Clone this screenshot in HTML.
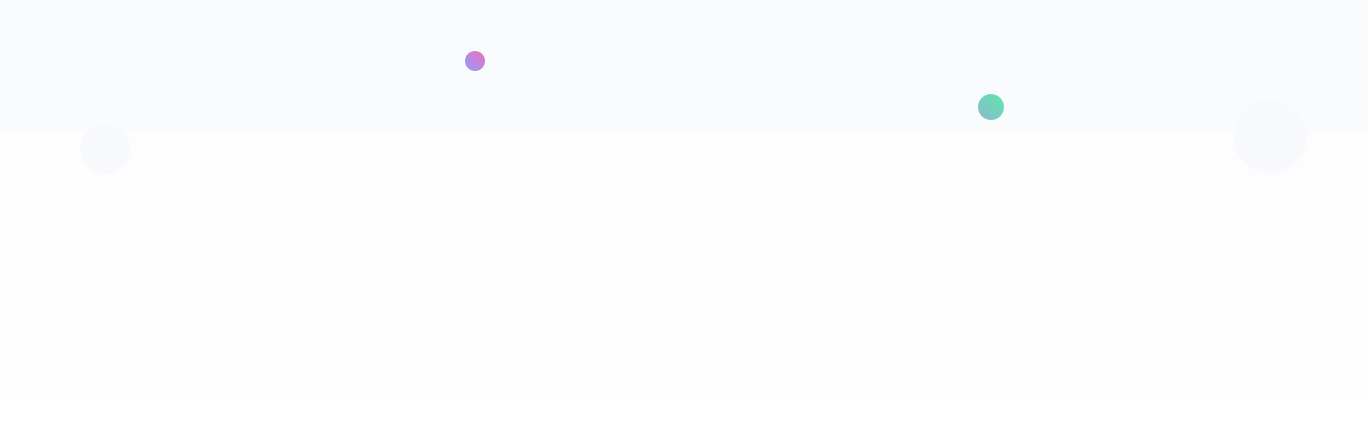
<!DOCTYPE html>
<html><head><style>
html,body{margin:0;padding:0;width:1368px;height:424px;overflow:hidden;background:#fff;position:relative}
.b{position:absolute;left:0;width:1368px}
.c{position:absolute;border-radius:50%}
</style></head><body>
<div class="b" style="top:0;height:132px;background:#fafbfc"></div>
<div class="b" style="top:132px;height:133px;background:#fdfdfe"></div>
<div class="b" style="top:265px;height:131px;background:#fefefe"></div>
<div class="c" style="left:465px;top:51px;width:20px;height:20px;background:linear-gradient(225deg,#ee70c0,#8f9cf8)"></div>
<div class="c" style="left:978px;top:94px;width:26px;height:26px;background:linear-gradient(45deg,#8cb8c8,#5de8b0)"></div>
<div class="c" style="left:80px;top:124px;width:50px;height:50px;background:#f8f9fc"></div>
<div class="c" style="left:1233px;top:99px;width:74px;height:74px;background:#f8f9fc"></div>
</body></html>
